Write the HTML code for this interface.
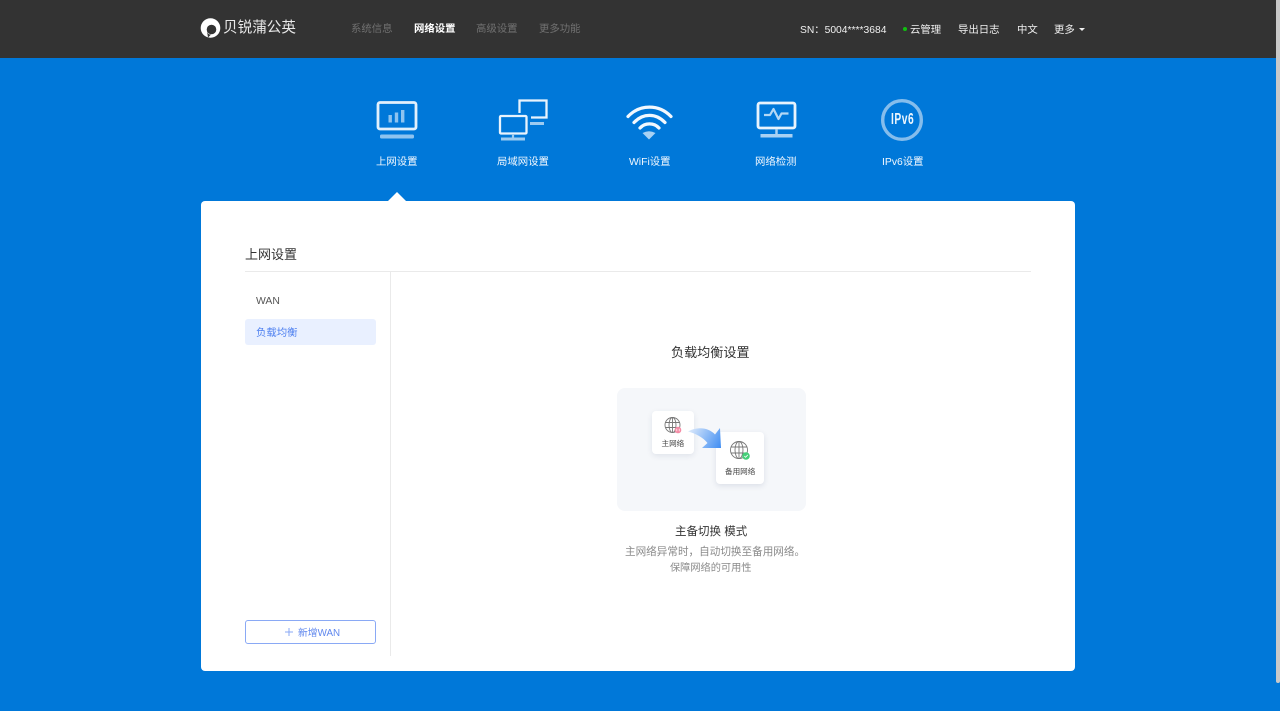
<!DOCTYPE html>
<html lang="zh-CN">
<head>
<meta charset="utf-8">
<title>上网设置</title>
<style>
html,body{margin:0;padding:0;width:1280px;height:711px;overflow:hidden;background:#0078d9;font-family:"Liberation Sans","Noto Sans CJK SC",sans-serif;}
#w{position:absolute;left:0;top:0;width:1280px;height:711px;overflow:hidden;background:#0078d9;filter:blur(.3px);}
.t{position:absolute;white-space:nowrap;line-height:1;}
.b{position:absolute;}
svg{position:absolute;left:0;top:0;}
</style>
</head>
<body>
<div id="w">
<div class="b" style="left:0;top:0;width:1280px;height:58px;background:#333333"></div>

<!-- logo -->
<svg width="1280" height="711" viewBox="0 0 1280 711" style="z-index:3">
  <circle cx="210.500" cy="28" r="9.800" fill="#fff"/>
  <circle cx="211.500" cy="29.500" r="4.800" fill="#333"/>
  <path d="M207 31 q1 4 4 3.500 l-3 3z" fill="#333"/>
</svg>
<div class="t" style="left:223px;top:21px;font-size:14.600px;color:#e8e8e8;z-index:3">贝锐蒲公英</div>
<div class="t" style="left:351px;top:24.500px;font-size:10.400px;color:#717171">系统信息</div>
<div class="t" style="left:414px;top:24.500px;font-size:10.400px;color:#ffffff;font-weight:bold">网络设置</div>
<div class="t" style="left:476px;top:24.500px;font-size:10.400px;color:#717171">高级设置</div>
<div class="t" style="left:539px;top:24.500px;font-size:10.400px;color:#717171">更多功能</div>

<div class="t" style="left:800px;top:26px;font-size:10.300px;color:#f0f0f0">SN：5004****3684</div>
<div class="b" style="left:903px;top:27px;width:4px;height:4px;border-radius:50%;background:#10c010"></div>
<div class="t" style="left:910px;top:26px;font-size:10.400px;color:#f0f0f0">云管理</div>
<div class="t" style="left:958px;top:26px;font-size:10.400px;color:#f0f0f0">导出日志</div>
<div class="t" style="left:1017px;top:26px;font-size:10.400px;color:#f0f0f0">中文</div>
<div class="t" style="left:1054px;top:26px;font-size:10.400px;color:#f0f0f0">更多</div>
<div class="b" style="left:1079px;top:28px;width:0;height:0;border-left:3px solid transparent;border-right:3px solid transparent;border-top:3px solid #f0f0f0"></div>

<!-- scrollbar -->
<div class="b" style="left:1276px;top:0;width:4px;height:683px;background:#c9c9c9;border-radius:0 0 2px 2px"></div>

<!-- top icons -->
<svg width="1280" height="711" viewBox="0 0 1280 711" fill="none">
  <!-- monitor -->
  <rect x="378" y="102.500" width="38" height="26.500" rx="2" stroke="#e2f0fc" stroke-width="2.800"/>
  <rect x="380" y="134.500" width="34" height="4" rx="1.500" fill="#8ec3ef"/>
  <rect x="388.500" y="115" width="3.400" height="7.500" fill="#8ec3ef"/>
  <rect x="394.800" y="112.500" width="3.400" height="10" fill="#8ec3ef"/>
  <rect x="401" y="110" width="3.400" height="12.500" fill="#8ec3ef"/>
  <!-- LAN -->
  <rect x="500" y="116" width="26.500" height="17.500" rx="1" stroke="#e8f3fd" stroke-width="2.300"/>
  <path d="M513 134v4.500" stroke="#9dcbf1" stroke-width="2.200"/>
  <rect x="501" y="137.500" width="24" height="3" fill="#9dcbf1"/>
  <path d="M519.500 113v-12.500h27v17h-15.500" stroke="#e8f3fd" stroke-width="2.300"/>
  <rect x="530" y="122" width="14" height="3" fill="#9dcbf1"/>
  <!-- wifi -->
  <path d="M628 116.500C640 104 659 104 671 116.500" stroke="#f2f8fe" stroke-width="3.200" stroke-linecap="round"/>
  <path d="M634 122.500C643 113 656 113 665 122.500" stroke="#f2f8fe" stroke-width="3.200" stroke-linecap="round"/>
  <path d="M640 128C645 122.500 654 122.500 659 128" stroke="#f2f8fe" stroke-width="3.200" stroke-linecap="round"/>
  <path d="M642.500 133Q649 129.500 655.500 133L649 139.500Z" fill="#a8d1f3"/>
  <!-- detect -->
  <rect x="758" y="103" width="37" height="25" rx="2" stroke="#e8f3fd" stroke-width="2.800"/>
  <path d="M764 115h6l3.500-6 5 10 3-5.500h7" stroke="#b4d8f5" stroke-width="2.200" stroke-linejoin="round"/>
  <path d="M776.500 129v6.500" stroke="#a8d1f3" stroke-width="2.500"/>
  <rect x="760.500" y="134" width="32" height="3.500" fill="#a8d1f3"/>
  <!-- ipv6 -->
  <circle cx="902" cy="120" r="19.300" stroke="#85bdec" stroke-width="3.400"/>
</svg>
<div class="t" style="left:890.500px;top:112px;font-size:15.500px;color:#eef6fd;font-weight:bold;transform:scaleX(.66);transform-origin:0 0;font-family:'Liberation Sans',sans-serif;letter-spacing:.8px;">IPv6</div>

<div class="t" style="left:376px;top:158px;font-size:10.400px;color:#f2f8fe">上网设置</div>
<div class="t" style="left:497px;top:158px;font-size:10.400px;color:#f2f8fe">局域网设置</div>
<div class="t" style="left:629px;top:158px;font-size:10.400px;color:#f2f8fe">WiFi设置</div>
<div class="t" style="left:755px;top:158px;font-size:10.400px;color:#f2f8fe">网络检测</div>
<div class="t" style="left:882px;top:158px;font-size:10.400px;color:#f2f8fe">IPv6设置</div>

<!-- caret -->
<div class="b" style="left:388px;top:192px;width:0;height:0;border-left:9px solid transparent;border-right:9px solid transparent;border-bottom:9px solid #fff"></div>

<!-- card -->
<div class="b" style="left:201px;top:201px;width:874px;height:470px;background:#fff;border-radius:4px"></div>
<div class="t" style="left:245px;top:248px;font-size:13px;color:#333">上网设置</div>
<div class="b" style="left:245px;top:271px;width:786px;height:1px;background:#eaeaea"></div>
<div class="b" style="left:390px;top:272px;width:1px;height:384px;background:#eaeaea"></div>

<div class="t" style="left:256px;top:297px;font-size:10.400px;color:#555">WAN</div>
<div class="b" style="left:245px;top:319px;width:131px;height:26px;background:#e9f0ff;border-radius:3px"></div>
<div class="t" style="left:256px;top:329px;font-size:10.400px;color:#4d7ff0">负载均衡</div>

<div class="b" style="left:245px;top:620px;width:129px;height:22px;border:1px solid #8aa9f5;border-radius:3px;background:#fff"></div>
<svg width="1280" height="711" viewBox="0 0 1280 711" fill="none">
  <path d="M289 628v8M285 632h8" stroke="#8aa9f5" stroke-width="1"/>
</svg>
<div class="t" style="left:298px;top:629px;font-size:9.800px;color:#5f87ee">新增WAN</div>

<div class="t" style="left:671px;top:346px;font-size:13.100px;color:#333">负载均衡设置</div>

<!-- illustration -->
<div class="b" style="left:617px;top:388px;width:189px;height:123px;background:#f5f7fa;border-radius:8px"></div>
<div class="b" style="left:652px;top:411px;width:42px;height:43px;background:#fff;border-radius:4px;box-shadow:0 2px 6px rgba(40,60,100,.10)"></div>
<div class="b" style="left:716px;top:432px;width:48px;height:52px;background:#fff;border-radius:4px;box-shadow:0 2px 6px rgba(40,60,100,.12)"></div>
<svg width="1280" height="711" viewBox="0 0 1280 711" fill="none">
  <defs>
    <linearGradient id="g" x1="689" y1="430" x2="721" y2="448" gradientUnits="userSpaceOnUse">
      <stop offset="0" stop-color="#dbe9fb"/>
      <stop offset="1" stop-color="#3f8df2"/>
    </linearGradient>
  </defs>
  <path d="M688 431.500C698 426 709 428 715 434.500L720 428L721 448H702L707.500 443C703 437.500 696 433.500 688 431.500Z" fill="url(#g)"/>
  <g stroke="#777" stroke-width=".9">
    <circle cx="672.500" cy="425" r="7.500"/>
    <ellipse cx="672.500" cy="425" rx="3.500" ry="7.500"/>
    <path d="M672.500 417.500v15M665.500 422.500h14M665.500 427.500h14"/>
    <circle cx="739" cy="450" r="8.500"/>
    <ellipse cx="739" cy="450" rx="4" ry="8.500"/>
    <path d="M739 441.500v17M731 447h16M731 453h16"/>
  </g>
  <circle cx="678" cy="430" r="3.300" fill="#f58ba5"/>
  <path d="M676.800 428.800v2.400M679.200 428.800v2.400" stroke="#fff" stroke-width=".7"/>
  <circle cx="746" cy="456" r="3.800" fill="#45cf78"/>
  <path d="M744.300 456l1.300 1.300 2.200-2.400" stroke="#fff" stroke-width=".8"/>
</svg>
<div class="t" style="left:661.500px;top:440px;font-size:7.600px;color:#444">主网络</div>
<div class="t" style="left:725px;top:468px;font-size:7.600px;color:#444">备用网络</div>

<div class="t" style="left:675px;top:527px;font-size:11.500px;color:#333">主备切换 模式</div>
<div class="t" style="left:625px;top:547px;font-size:10.600px;color:#8a8a8a">主网络异常时，自动切换至备用网络。</div>
<div class="t" style="left:670px;top:564px;font-size:10.200px;color:#8a8a8a">保障网络的可用性</div>
</div>
</body>
</html>
